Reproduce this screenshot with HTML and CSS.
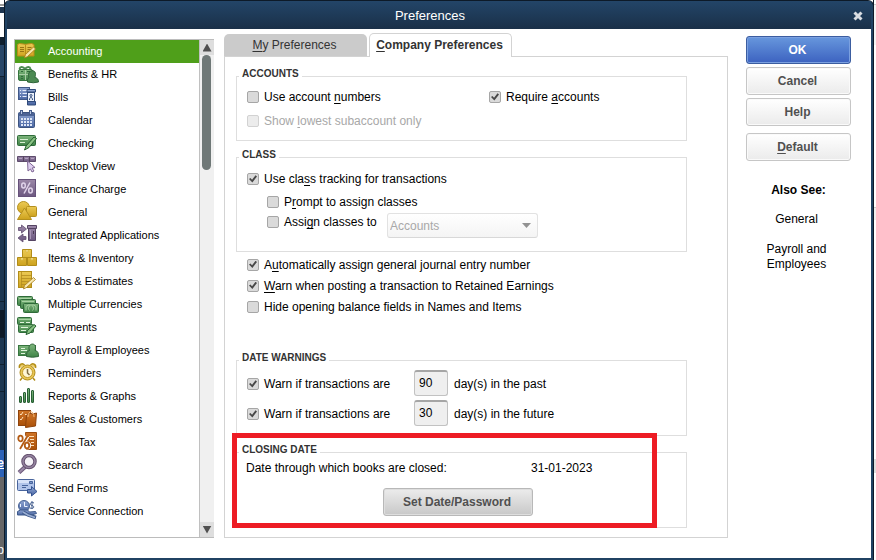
FILE: index.html
```html
<!DOCTYPE html>
<html lang="en">
<head>
<meta charset="utf-8">
<title>Preferences</title>
<link rel="stylesheet" href="styles.css">
</head>
<body>
<svg class="defs" aria-hidden="true">
  <defs>
    <linearGradient id="gold" x1="0" y1="0" x2="0" y2="1"><stop offset="0" stop-color="#ecca55"/><stop offset="1" stop-color="#cda21d"/></linearGradient>
    <linearGradient id="green" x1="0" y1="0" x2="0" y2="1"><stop offset="0" stop-color="#7fb67d"/><stop offset="1" stop-color="#3f8347"/></linearGradient>
    <linearGradient id="blue" x1="0" y1="0" x2="0" y2="1"><stop offset="0" stop-color="#8fa5d2"/><stop offset="1" stop-color="#4a66a3"/></linearGradient>
    <linearGradient id="purple" x1="0" y1="0" x2="0" y2="1"><stop offset="0" stop-color="#9c88a8"/><stop offset="1" stop-color="#6c5880"/></linearGradient>
    <linearGradient id="orange" x1="0" y1="0" x2="0" y2="1"><stop offset="0" stop-color="#cf7427"/><stop offset="1" stop-color="#aa5008"/></linearGradient>
  </defs>
</svg>
<div class="desktop">
  <div class="behind-left" aria-hidden="true"><span class="frag-link">e</span><span class="frag-foot">p</span></div>
  <div class="dialog" role="dialog" aria-labelledby="title">
    <header class="titlebar">
      <h1 id="title">Preferences</h1>
      <button class="close" aria-label="Close"><svg viewBox="0 0 10 10"><path d="M1.500 1.500l7 7M8.500 1.500l-7 7" stroke="#d9dde2" stroke-width="3" fill="none"/></svg></button>
    </header>
    <div class="content">
      <div class="listbox">
        <nav class="list">
          <a class="current" href="#accounting"><svg viewBox="0 0 22 22"><path d="M.5 4.500l2-1 6 .8 6-.8 2.500 1v11.500h-7l-1 1-1-1h-7.500z" fill="url(#gold)" stroke="#b88c18"/><path d="M8.500 4.500v12" stroke="#b88c18"/><path d="M3 7.500h4M3 9.500h4M3 11.500h4M10.500 7.500h4M10.500 9.500h4M10.500 11.500h2" stroke="#9a7414"/><path d="M7.500 18l1-3.500 8-7.500 2 2-8 7.500z" fill="#f7e5a8" stroke="#a87c16" stroke-width=".8"/></svg>Accounting</a>
          <a href="#benefits"><svg viewBox="0 0 22 22"><path d="M8 6C6 3 3 3.500 2.500 6M8 6c2-3 5-2.500 5.500 0" fill="none" stroke="#4c8a52" stroke-width="2"/><rect x="1.500" y="6.500" width="14" height="11" rx="1.500" fill="url(#green)" stroke="#37753f"/><path d="M8.500 7v10M2 11.500h13" stroke="#a9cfa5"/><path d="M4 8.500h2M10 8.500h3M4 13.500h2M4 15.500h2" stroke="#2f6b39"/><path d="M12 14.500c-3-7 7-9.500 6.500-3 0 1.500-.5 2-.5 3 2.500.5 3.500 2 3.500 4.500q-5 1.500-11 0c0-2.500 0-3.500 1.500-4.500z" fill="#4c8a52" stroke="#2f6539"/></svg>Benefits &amp; HR</a>
          <a href="#bills"><svg viewBox="0 0 22 22"><rect x="1.500" y="1.500" width="11" height="12" fill="url(#blue)" stroke="#405887"/><path d="M3 4.500h1M5.500 4.500h5M3 7.500h1M5.500 7.500h5M3 10.500h1M5.500 10.500h4" stroke="#e5ecfa"/><path d="M10 3.500h8.500v2.500h-8.500zM10.500 15.500h8v3.500h-8z" fill="url(#blue)" stroke="#304b7b"/><rect x="10.500" y="6.500" width="7" height="9" fill="#eaf0fb" stroke="#304b7b"/><circle cx="14" cy="9.500" r="1" fill="none" stroke="#304b7b"/><path d="M12.500 14c0-3.500 3-3.500 3 0" stroke="#304b7b" fill="none"/></svg>Bills</a>
          <a href="#calendar"><svg viewBox="0 0 22 22"><rect x="1.500" y="3.500" width="16" height="15" rx="1" fill="url(#blue)" stroke="#3d547f"/><path d="M1.500 5.500h16" stroke="#4d6496" stroke-width="3"/><path d="M4.500 1v5M13.500 1v5" stroke="#455c8c" stroke-width="3"/><path d="M4.500 2v3M13.500 2v3" stroke="#b8c6e4"/><path d="M4 10h11.500M4 13h11.500M4 16h11.500" stroke="#dfe7f6" stroke-width="2" stroke-dasharray="2 1"/></svg>Calendar</a>
          <a href="#checking"><svg viewBox="0 0 22 22"><rect x=".5" y="3.500" width="18" height="10" rx="1" fill="url(#green)" stroke="#2f6b39"/><path d="M3 7.500h8M3 10.500h5" stroke="#d8efd3"/><path d="M7.500 18l1.500-4 8-9 2.500 1.500-7.500 9z" fill="#8ac284" stroke="#24602f"/></svg>Checking</a>
          <a href="#desktop"><svg viewBox="0 0 22 22"><path d="M.5 1.500h18v5h-18z" fill="url(#purple)" stroke="#5e4c6d"/><path d="M6.500 1.500v5M12.500 1.500v5" stroke="#56445f"/><path d="M2 3.500h3M8 3.500h3M14 3.500h3" stroke="#b3a1bf"/><path d="M10.500 6l7.500 6.500-3 .5 2 3-2 1-1.500-3-2.500 2z" fill="#dfcff0" stroke="#806795"/></svg>Desktop View</a>
          <a href="#finance"><svg viewBox="0 0 22 22"><rect x="1.500" y="1.500" width="17" height="17" fill="url(#purple)" stroke="#66527a"/><path d="M13 4.500l-6 11" stroke="#e0d3e9" stroke-width="1.500"/><ellipse cx="6.500" cy="7.500" rx="1.800" ry="2.500" fill="none" stroke="#e0d3e9" stroke-width="1.500"/><ellipse cx="13.500" cy="12.500" rx="1.800" ry="2.500" fill="none" stroke="#e0d3e9" stroke-width="1.500"/></svg>Finance Charge</a>
          <a href="#general"><svg viewBox="0 0 22 22"><circle cx="6.500" cy="6.500" r="6" fill="url(#gold)" stroke="#b4901e"/><rect x="9.500" y="5.500" width="10" height="10" rx="1" fill="url(#gold)" stroke="#b4901e"/><path d="M7.500 7l7 11.500h-14z" fill="url(#gold)" stroke="#b4901e"/></svg>General</a>
          <a href="#integrated"><svg viewBox="0 0 22 22"><path d="M1.500 3.500h3v-2.500l5 4-5 4v-2.500h-3zM9 12.500h-3v-2.500l-5 4 5 4v-2.500h3z" fill="url(#purple)" stroke="#5f4d70" stroke-width=".8"/><path d="M10.500 1.500h9v3h-9zM11.500 4.500h7v12h-7z" fill="url(#purple)" stroke="#554462"/><path d="M13.500 6v9" stroke="#a895b5"/><path d="M16.500 7v3" stroke="#493952"/></svg>Integrated Applications</a>
          <a href="#items"><svg viewBox="0 0 22 22"><path d="M5.500 2.500h9v8h-9zM.5 10.500h9v8h-9zM10.500 10.500h9v8h-9z" fill="url(#gold)" stroke="#b28d18"/><path d="M9 3v2h2v-2M4 11v2h2v-2M14 11v2h2v-2" fill="#f7e7a5" stroke="#d9b53d" stroke-width=".7"/></svg>Items &amp; Inventory</a>
          <a href="#jobs"><svg viewBox="0 0 22 22"><rect x="1.500" y="1.500" width="13" height="16" fill="url(#gold)" stroke="#b28d18"/><path d="M4.500 2v15M4 5.500h10M4 8.500h10M4 11.500h10M4 14.500h8" stroke="#b48d20" stroke-width=".8"/><path d="M6.500 19l1-3.500 9-8 2 2-9 8z" fill="#f8e8b0" stroke="#a67b16" stroke-width=".8"/></svg>Jobs &amp; Estimates</a>
          <a href="#currencies"><svg viewBox="0 0 22 22"><rect x=".5" y="3.500" width="15" height="9" rx="1" fill="url(#green)" stroke="#2f6b39"/><rect x="3.500" y="6.500" width="15" height="9" rx="1" fill="url(#green)" stroke="#2f6b39"/><rect x="6.500" y="10.500" width="15" height="9" rx="1" fill="url(#green)" stroke="#2f6b39"/><path d="M2 5.500h12M5 8.500h12M9 17.500v-4l2-1.500h2.500c-3 2.500-2 4.500-1 5.500M19 17.500v-4l-2-1.500h-2.500c3 2.500 2 4.500 1 5.500" stroke="#a9d3a4" fill="none"/></svg>Multiple Currencies</a>
          <a href="#payments"><svg viewBox="0 0 22 22"><rect x="1.500" y="8.500" width="15" height="8" rx="1" fill="url(#green)" stroke="#2f6b39"/><rect x=".5" y="1.500" width="14" height="7" rx="1" fill="url(#green)" stroke="#2f6b39"/><path d="M2 3.500h12" stroke="#a9d3a4"/><path d="M3 6.500h4M9 6.500h4M4 11.500h7M4 14.500h5" stroke="#e2f4de"/><path d="M9 18.500l1.500-4 6.500-6 2 1.500-6 7z" fill="#8ac284" stroke="#24602f"/></svg>Payments</a>
          <a href="#payroll"><svg viewBox="0 0 22 22"><rect x="1.500" y="6.500" width="17" height="10" fill="url(#green)" stroke="#37753f"/><path d="M4 9.500h4M4 11.500h6M4 14.500h4" stroke="#e2f4de"/><path d="M12.500 11.500c-3-7 6.500-9 6-2.500 0 1.500-.5 1.500-.5 2.500 3 .5 3.500 2.500 3.500 6q-6 1.500-12 0c0-3.500.5-5.500 3-6z" fill="url(#green)" stroke="#2f6539"/></svg>Payroll &amp; Employees</a>
          <a href="#reminders"><svg viewBox="0 0 22 22"><path d="M2.500 6c-1-4 3-5.500 5-3M18.500 6c1-4-3-5.500-5-3M5 16l-2 2.500M16 16l2 2.500" fill="#ebcb61" stroke="#b28d18" stroke-width="1.500"/><circle cx="10.500" cy="10.500" r="7.500" fill="#e6c454" stroke="#b28d18"/><circle cx="10.500" cy="10.500" r="5" fill="#fff7d6" stroke="#c59d29"/><path d="M10.500 7v4l2 2" fill="none" stroke="#7f6d43" stroke-width="1.500"/></svg>Reminders</a>
          <a href="#reports"><svg viewBox="0 0 22 22"><g fill="url(#green)" stroke="#285f35"><rect x="2.500" y="11.500" width="2" height="6" rx=".5"/><rect x="6.500" y="7.500" width="2" height="10" rx=".5"/><rect x="10.500" y="3.500" width="2" height="14" rx=".5"/><rect x="14.500" y="5.500" width="2" height="12" rx=".5"/></g></svg>Reports &amp; Graphs</a>
          <a href="#customers"><svg viewBox="0 0 22 22"><rect x="1.500" y="2.500" width="12" height="15" fill="url(#orange)" stroke="#8e430c"/><path d="M3 6l1 1 2-3M3 11l1 1 2-3M8 6.500h4" fill="none" stroke="#ffe1bb"/><path d="M9.500 7l3-2 3 1 4-1-1 13-10 1.500z" fill="url(#orange)" stroke="#8e430c"/><path d="M11 9c0-7 6-7 6 0" fill="none" stroke="#f0b77a"/></svg>Sales &amp; Customers</a>
          <a href="#tax"><svg viewBox="0 0 22 22"><path d="M8.500 1.500h11v17h-10z" fill="url(#orange)" stroke="#9c4b0c"/><path d="M12 5.500h5M13 8.500h4M14 11.500h3M14 14.500h3" stroke="#ffdfb6"/><g fill="none" stroke="#fff" stroke-width="4"><circle cx="3.500" cy="7.500" r="2"/><circle cx="10" cy="14.500" r="2"/><path d="M10.500 5.500l-7.500 12"/></g><g fill="none" stroke="#b35b14" stroke-width="1.800"><ellipse cx="3.500" cy="7.500" rx="2.200" ry="2.800"/><ellipse cx="10" cy="14.500" rx="2.200" ry="2.800"/><path d="M10.500 5l-7.500 13"/></g></svg>Sales Tax</a>
          <a href="#search"><svg viewBox="0 0 22 22"><path d="M8 13l-6 5.500" stroke="#6a5778" stroke-width="4"/><path d="M8 13l-6 5.500" stroke="#9c8aa8" stroke-width="2"/><circle cx="12" cy="7.500" r="6" fill="#f6f4f8" stroke="#65516f" stroke-width="3.500"/><circle cx="12" cy="7.500" r="6" fill="none" stroke="#9584a0" stroke-width="1.500"/></svg>Search</a>
          <a href="#send"><svg viewBox="0 0 22 22"><rect x=".5" y="2.500" width="17" height="11" rx="1" fill="#b1c4ea" stroke="#48649c"/><path d="M1 3h16v3h-16z" fill="#d7e2f8"/><path d="M12.500 4.500h3v2h-3zM5 8.500h6M5 10.500h4" stroke="#48649c" fill="#7893c7"/><path d="M10.500 12.500h4v-3l5.500 5-5.500 4.500v-3h-4z" fill="url(#blue)" stroke="#345392"/></svg>Send Forms</a>
          <a href="#service"><svg viewBox="0 0 22 22"><circle cx="7" cy="6" r="5.500" fill="url(#blue)" stroke="#486394"/><path d="M7.500 2v4.500h3M3.500 4v3" stroke="#eef4ff" fill="none"/><path d="M17 3c-4-2-5 2-2 2.500s2 4-2 2.500M15 1v8" fill="none" stroke="#405b8c"/><path d="M.5 11.500l3-1.500h7l2 2 6-.5 1 2-5 1.500h-14z" fill="url(#blue)" stroke="#3f5a8b"/><path d="M6 12l5 3 8 2.500" stroke="#3f5a8b" stroke-width="3.500" fill="none"/><path d="M6 12l5 3 7 2.500" stroke="#9bafd4" stroke-width="1.500" fill="none"/></svg>Service Connection</a>
        </nav>
        <div class="scrollbar">
          <button class="arrow up" aria-label="Scroll up"></button>
          <div class="track"><div class="thumb"></div></div>
          <button class="arrow down" aria-label="Scroll down"></button>
        </div>
      </div>

      <main class="center">
        <div class="tabs" role="tablist">
          <button class="tab" role="tab" aria-selected="false"><u>M</u>y Preferences</button>
          <button class="tab active" role="tab" aria-selected="true"><u>C</u>ompany Preferences</button>
        </div>
        <form class="panel" role="tabpanel">
          <fieldset class="accounts">
            <legend>ACCOUNTS</legend>
            <div class="pair">
              <label><input type="checkbox"><span>Use account <u>n</u>umbers</span></label>
              <label><input type="checkbox" checked><span>Require <u>a</u>ccounts</span></label>
              <label class="disabled"><input type="checkbox" disabled><span>Show <u>l</u>owest subaccount only</span></label>
            </div>
          </fieldset>
          <fieldset class="class-set">
            <legend>CLASS</legend>
            <label><input type="checkbox" checked><span>Use cla<u>s</u>s tracking for transactions</span></label>
            <label class="sub"><input type="checkbox"><span>P<u>r</u>ompt to assign classes</span></label>
            <div class="assign">
              <label><input type="checkbox"><span>Assi<u>g</u>n classes to</span></label>
              <div class="select"><select aria-label="Assign classes to" disabled><option>Accounts</option></select></div>
            </div>
          </fieldset>
          <div class="loose">
            <label><input type="checkbox" checked><span>A<u>u</u>tomatically assign general journal entry number</span></label>
            <label><input type="checkbox" checked><span><u>W</u>arn when posting a transaction to Retained Earnings</span></label>
            <label><input type="checkbox"><span>Hide opening balance fields in Names and Items</span></label>
          </div>
          <fieldset class="warnings">
            <legend>DATE WARNINGS</legend>
            <div class="warn">
              <label><input type="checkbox" checked><span>Warn if transactions are</span></label>
              <input class="days" type="text" id="past" value="90"><label for="past">day(s) in the past</label>
            </div>
            <div class="warn">
              <label><input type="checkbox" checked><span>Warn if transactions are</span></label>
              <input class="days" type="text" id="future" value="30"><label for="future">day(s) in the future</label>
            </div>
          </fieldset>
          <div class="closing">
            <fieldset>
              <legend>CLOSING DATE</legend>
              <div class="closed"><span>Date through which books are closed:</span><span>31-01-2023</span></div>
              <button class="button set-date" type="button">Set Date/Password</button>
            </fieldset>
            <div class="highlight"></div>
          </div>
        </form>
      </main>

      <aside class="side">
        <button class="button primary">OK</button>
        <button class="button">Cancel</button>
        <button class="button">Help</button>
        <button class="button default"><u>D</u>efault</button>
        <h2>Also See:</h2>
        <a href="#general">General</a>
        <a href="#payroll">Payroll and Employees</a>
      </aside>
    </div>
  </div>
  <div class="behind-right" aria-hidden="true"></div>
</div>
</body>
</html>
```
FILE: styles.css
```css
* {
  box-sizing: border-box;
}

body {
  margin: 0;
  background: #fff;
  color: #000;
  font: 12px/16px "Liberation Sans", Arial, sans-serif;
}

button,
input,
select {
  font: inherit;
  margin: 0;
}

a {
  color: inherit;
  text-decoration: none;
}

u {
  text-underline-offset: 2px;
}

.defs {
  position: absolute;
  width: 0;
  height: 0;
}

/* Application window seen behind the dialog */
.desktop {
  display: grid;
  grid-template-columns: 5px 1fr 3px;
  min-height: 100vh;
}

.behind-left {
  position: relative;
  overflow: hidden;
  border-right: 1px solid #0d1a28;
  background: linear-gradient(#fff 4px, #999 4px 6px, #fff 6px 7px, #1d3550 7px 13px, #fff 13px 37px, #10202f 37px 45px, #274668 45px 76px, #10202f 76px 77px, #1d3752 77px 301px, #10202f 301px 302px, #1d3752 302px 310px, #0e1a27 310px 337px, #10202f 337px 338px, #1d3752 338px 364px, #10202f 364px 365px, #1d3752 365px 391px, #10202f 391px 392px, #1d3752 392px 450px, #2b62b8 450px 477px, #666 477px);
  color: #fff;
}

.frag-link,
.frag-foot {
  position: absolute;
  right: 0;
}

.frag-link {
  top: 455px;
  font-weight: bold;
  text-decoration: underline;
}

.frag-foot {
  top: 542px;
}

.behind-right {
  border-left: 1px solid #0d1a28;
  background: linear-gradient(#fff 4px, #ccc 4px 5px, #f3f3f3 5px 45px, #fff 45px 207px, #ccc 207px 208px, #eee 208px 220px, #fff 220px 459px, #ddd 459px 473px, #fff 473px);
}

.dialog {
  display: flex;
  flex-direction: column;
  margin-top: 1px;
  border: solid #204263;
  border-width: 0 2px 2px;
  border-radius: 5px 5px 0 0;
  box-shadow: 0 0 0 1px #0d1a28;
  background: #fff;
}

.titlebar {
  display: flex;
  align-items: center;
  height: 28px;
  padding: 2px 8px 0 0;
  background: linear-gradient(#234568, #1a3048);
  color: #fff;
}

.titlebar h1 {
  flex: 1;
  margin: 0;
  font-size: 13px;
  font-weight: normal;
  text-align: center;
}

.close {
  width: 10px;
  height: 10px;
  padding: 0;
  border: 0;
  background: none;
}

.close svg {
  display: block;
}

.content {
  flex: 1;
  display: grid;
  grid-template-columns: 200px 1fr 105px;
  padding: 4px 20px 20px 7px;
}

/* Category list */
.listbox {
  display: flex;
  margin-top: 6px;
  border: 1px solid #bcbcbc;
  border-right: 0;
  font-size: 11px;
}

.list {
  flex: 1;
  border-right: 1px solid #c0c0c0;
}

.list a {
  display: flex;
  align-items: center;
  gap: 9px;
  height: 23px;
  padding: 0 0 1px 2px;
}

.list svg {
  width: 22px;
  height: 22px;
}

.list .current {
  background: #4f9f1a;
  color: #fff;
}

.scrollbar {
  display: flex;
  flex-direction: column;
  width: 14px;
  background: #f0f0f0;
}

.arrow {
  display: grid;
  place-items: center;
  height: 15px;
  padding: 0;
  border: 0;
  background: #dedede;
}

.arrow::before {
  content: "";
  width: 9px;
  height: 8px;
  background: #505050;
  clip-path: polygon(50% 0, 100% 100%, 0 100%);
}

.arrow.down::before {
  clip-path: polygon(0 0, 100% 0, 50% 100%);
}

.track {
  flex: 1;
  padding: 0 3px 0 2px;
}

.thumb {
  height: 115px;
  border-radius: 5px;
  background: #6f7877;
}

/* Tabs and panel */
.center {
  display: flex;
  flex-direction: column;
  margin: 0 18px 0 10px;
}

.tabs {
  display: flex;
  align-items: flex-end;
  gap: 2px;
  height: 24px;
  margin-bottom: -1px;
}

.tab {
  width: 143px;
  height: 23px;
  padding: 0 2px 2px 0;
  border: 0;
  border-radius: 5px 5px 0 0;
  background: #cbcbcb;
  color: #333;
}

.tab.active {
  position: relative;
  height: 24px;
  border: 1px solid #d3d3d3;
  border-bottom: 0;
  background: #fff;
  font-weight: bold;
}

.panel {
  flex: 1;
  padding: 11px 40px 9px 11px;
  border: 1px solid #d3d3d3;
}

fieldset {
  min-width: 0;
  margin: 0;
  padding: 1px 10px 11px;
  border: 1px solid #dedede;
}

legend {
  margin-left: -8px;
  padding: 0 3px 5px;
  color: #333;
  font-size: 10px;
  font-weight: bold;
  line-height: 12px;
}

label {
  display: flex;
  align-items: center;
  gap: 5px;
}

label.disabled {
  color: #a8a8a8;
}

input[type="checkbox"] {
  appearance: none;
  display: grid;
  place-items: center;
  flex: none;
  width: 12px;
  height: 12px;
  border: 1px solid #a6a6a6;
  border-radius: 2px;
  background: #dadada;
}

input[type="checkbox"]:checked::before {
  content: "";
  width: 8px;
  height: 8px;
  background: #484848;
  clip-path: polygon(0 50%, 18% 38%, 38% 60%, 82% 4%, 100% 18%, 42% 94%);
}

input[type="checkbox"]:disabled {
  border-color: #d2d2d2;
  background: #ececec;
}

.pair {
  display: grid;
  grid-template-columns: 242px 1fr;
  row-gap: 8px;
  padding-top: 3px;
}

.class-set {
  margin-top: 8px;
  padding: 5px 10px 13px;
}

.sub {
  margin: 7px 0 3px 20px;
}

.assign {
  display: flex;
  margin-left: 20px;
}

.assign label {
  width: 120px;
  height: 18px;
}

.select {
  position: relative;
  width: 151px;
}

.select::after {
  content: "";
  position: absolute;
  top: 10px;
  right: 7px;
  width: 9px;
  height: 5px;
  background: #929292;
  clip-path: polygon(0 0, 100% 0, 50% 100%);
}

select {
  appearance: none;
  display: block;
  width: 100%;
  height: 25px;
  padding: 0 2px;
  border: 1px solid #e2e2e2;
  border-bottom-color: #d8d8d8;
  border-radius: 3px;
  background: linear-gradient(#fff, #f4f4f4);
}

select:disabled {
  color: #a8a8a8;
  opacity: 1;
}

.loose {
  margin: 2px 0 35px;
  padding-left: 11px;
}

.loose label {
  height: 21px;
}

.warnings {
  padding-bottom: 9px;
}

.warn {
  display: flex;
  align-items: center;
}

.warn + .warn {
  margin-top: 4px;
}

.warn label {
  padding-top: 2px;
}

.warn label:first-child {
  width: 167px;
}

.days {
  width: 34px;
  height: 26px;
  margin-right: 6px;
  padding: 0 4px 2px;
  border: 1px solid #c2c2c2;
  border-top: 2px solid #a5a5a5;
  border-radius: 3px;
  background: #efefef;
}

.closing {
  position: relative;
  margin-top: 8px;
}

.closed {
  display: grid;
  grid-template-columns: 285px 1fr;
  margin-left: -1px;
  line-height: 12px;
}

.highlight {
  position: absolute;
  inset: -11px 30px 0 -4px;
  border: 5px solid #ed1c24;
  pointer-events: none;
}

/* Buttons */
.button {
  display: block;
  width: 105px;
  height: 28px;
  padding: 0 2px 0 0;
  border: 1px solid #c6c6c6;
  border-radius: 3px;
  background: linear-gradient(#fff, #ebebeb);
  box-shadow: inset 0 0 0 1px #fafafa;
  color: #505050;
  font-weight: bold;
}

.button.set-date {
  width: 150px;
  margin: 14px 0 0 136px;
  border-color: #b8b8b8;
  background: linear-gradient(#ececec, #c8c8c8);
  box-shadow: inset 0 0 0 1px #dedede;
}

.button.primary {
  border-color: #3b5da0;
  background: linear-gradient(#6797dd, #3c62c0);
  box-shadow: inset 0 0 0 1px #7ba0e0;
  color: #fff;
}

.side {
  display: flex;
  flex-direction: column;
  gap: 3px;
  padding-top: 3px;
  line-height: 15px;
  text-align: center;
}

.side .default {
  margin-top: 4px;
}

.side h2 {
  margin: 19px 0 11px;
  font-size: 12px;
  line-height: 15px;
}

.side a {
  margin: 0 18px 12px 14px;
}
```
